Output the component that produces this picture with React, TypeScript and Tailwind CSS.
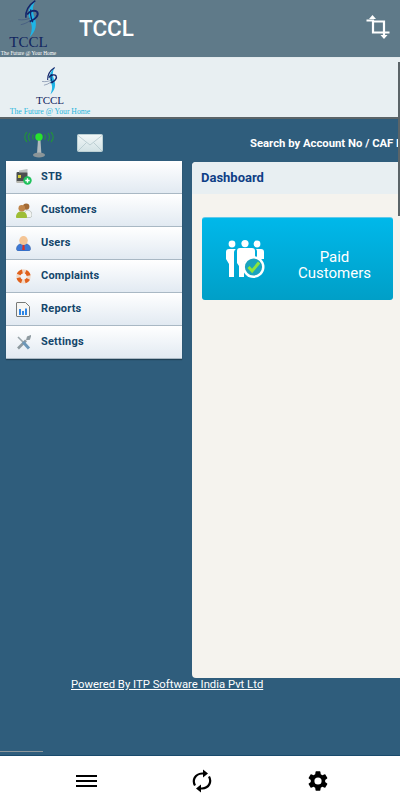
import React from 'react';

const Swoosh = ({ className }: { className: string }) => (
  <svg className={className} viewBox="0 0 40 60" fill="none">
    <path d="M30 1C20 10 17 20 21 30c3 8 6 14 0 29 10-10 12-20 8-31-3-9-5-16 1-27z" fill="#1fb4e6" />
    <path d="M30 1C21 7 14 15 15 28" stroke="#12256b" strokeWidth="2.400" />
    <path d="M17 23c4-6 13-8 16-4 3 5-3 12-12 15" stroke="#12256b" strokeWidth="3" />
    <path d="M23 15c-2 7 0 13 3 20" stroke="#12256b" strokeWidth="2" />
    <path d="M3 31c7 1 14 0 20-3M7 39c5-1 10-3 14-6" stroke="#3c527e" strokeWidth="1" />
  </svg>
);

const CropIcon = () => (
  <svg className="w-[24px] h-[24px]" viewBox="0 0 24 24" fill="none" stroke="white" strokeWidth="2.200">
    <path d="M0.500 5.500H7V17.500H23.500" />
    <path d="M7 6.500H18V21" />
    <path d="M6.500 0l-3.500 4h7z" fill="white" stroke="none" />
    <path d="M18 24l-3.500-4h7z" fill="white" stroke="none" />
  </svg>
);

const SignalIcon = () => (
  <svg className="w-[30px] h-[26px]" viewBox="0 0 30 26" fill="none">
    <path d="M6 1c-2 2-2 6 0 8M3 0C0 3 0 7 3 10M24 1c2 2 2 6 0 8M27 0c3 3 3 7 0 10M9.500 2.500c-1 1-1 4 0 5M20.500 2.500c1 1 1 4 0 5" stroke="#22943a" strokeWidth="1.100" />
    <path d="M14 7h2.400l1 15h-4.400z" fill="#b0babd" />
    <ellipse cx="15" cy="23" rx="6" ry="2.400" fill="#8b9598" />
    <circle cx="15" cy="5" r="3.700" fill="#28e32d" />
  </svg>
);

const MailIcon = () => (
  <svg className="w-[26px] h-[18px]" viewBox="0 0 26 18">
    <defs>
      <linearGradient id="mailFill" x1="0" y1="0" x2="0" y2="1">
        <stop offset="0" stopColor="#f2f7f7" />
        <stop offset="1" stopColor="#d2e2e5" />
      </linearGradient>
    </defs>
    <rect x="0.500" y="0.500" width="25" height="17" rx="1" fill="url(#mailFill)" stroke="#bcd0d4" />
    <path d="M1 1.500l12 9.500 12-9.500M1 17l8.500-8.500M25 17l-8.500-8.500" fill="none" stroke="#b4c8cd" strokeWidth="0.800" />
  </svg>
);

const StbIcon = () => (
  <svg className="w-[16px] h-[16px]" viewBox="0 0 16 16">
    <rect x="0.500" y="3" width="11" height="10" rx="1" fill="#4c5050" />
    <path d="M3 1.500l8.500-1.500v3.500H3z" fill="#b9bfbe" />
    <rect x="2" y="6" width="3" height="3" fill="#d8d23a" />
    <rect x="0.500" y="12" width="9" height="2" fill="#b6b6ae" />
    <circle cx="11.500" cy="11.500" r="4.200" fill="#1fc25c" />
    <path d="M9.300 10.700h1.500V9.300h1.400v1.400h1.500v1.600h-1.500v1.400h-1.400v-1.400H9.300z" fill="#ffffff" />
  </svg>
);

const CustomersIcon = () => (
  <svg className="w-[16px] h-[15px]" viewBox="0 0 16 15">
    <path d="M8 14c0-3 .500-6 3-7 3 0 5 2 5 5 0 1.500-1 2.500-2 2.500H8z" fill="#f2f4f2" stroke="#a3aba6" strokeWidth="0.600" />
    <circle cx="10.200" cy="3.600" r="3.200" fill="#a26a35" />
    <path d="M0 14c0-3.500 2-5.500 5.500-5.500S11 10.500 11 14c0 .500-.300 1-1 1H1c-.700 0-1-.500-1-1z" fill="#9dbd36" />
    <circle cx="5.800" cy="5.200" r="3.300" fill="#c08449" />
  </svg>
);

const UsersIcon = () => (
  <svg className="w-[15px] h-[15px]" viewBox="0 0 15 15">
    <path d="M0.500 13c0-3.500 2.500-5.500 7-5.500s7 2 7 5.500c0 1-.800 2-2 2h-10c-1.200 0-2-1-2-2z" fill="#3b78d6" stroke="#2a569a" strokeWidth="0.500" />
    <ellipse cx="7.500" cy="4.600" rx="4.300" ry="4.500" fill="#f4c596" />
    <path d="M6.600 9h1.800l.400 5h-2.600z" fill="#dc3126" />
  </svg>
);

const ComplaintsIcon = () => (
  <svg className="w-[15px] h-[15px]" viewBox="0 0 15 15" fill="none">
    <circle cx="7.500" cy="7.500" r="5.200" stroke="#f0d9c8" strokeWidth="4" />
    <circle cx="7.500" cy="7.500" r="5.200" stroke="#e0611c" strokeWidth="4" strokeDasharray="5 3.170" strokeDashoffset="2.500" transform="rotate(45 7.500 7.500)" />
  </svg>
);

const ReportsIcon = () => (
  <svg className="w-[14px] h-[15px]" viewBox="0 0 14 15">
    <path d="M0.500 1c0-.300.200-.500.500-.500h8.500l4 4V14c0 .300-.200.500-.500.500H1c-.300 0-.500-.200-.500-.500z" fill="#f6f6f4" stroke="#777a78" />
    <rect x="3" y="7" width="2" height="6" fill="#2f86e6" />
    <rect x="6" y="9" width="2" height="4" fill="#2f86e6" />
    <rect x="9" y="6.500" width="2" height="6.500" fill="#2f86e6" />
  </svg>
);

const SettingsIcon = () => (
  <svg className="w-[15px] h-[15px]" viewBox="0 0 15 15" fill="none">
    <path d="M2 13.500L10 5.500" stroke="#8e9aa0" strokeWidth="2.600" />
    <path d="M14.500 0.800L11.500 2l-.700 2.500 2.700-.300z" fill="#8e9aa0" stroke="#8e9aa0" strokeWidth="1.200" />
    <path d="M2 2L7 7" stroke="#9aa5aa" strokeWidth="1.600" />
    <path d="M7 7L13 13.500" stroke="#6c97b8" strokeWidth="3" />
  </svg>
);

const PaidIcon = () => (
  <svg className="w-[42px] h-[38px]" viewBox="0 0 42 38">
    <g fill="white">
      <circle cx="6" cy="4" r="3.400" />
      <circle cx="19" cy="3.600" r="3.600" />
      <circle cx="31" cy="4" r="3.400" />
      <path d="M0 12c0-2 1-3 3-3h7c-1.500 1-2 2-2 4v24H3V24l-3-5z" />
      <path d="M11 11c0-2 1-3 3-3h12c2 0 3 1 3 3v10H18v16h-5V26l-2-3z" />
      <path d="M30 9h5c2 0 3 1 3 3v7h-7v-7c0-1 0-2-1-3z" />
      <circle cx="27.500" cy="27" r="11" />
    </g>
    <circle cx="27.500" cy="27" r="8.600" fill="#1aa3bd" />
    <path d="M22.500 27l3.600 4 7-8.500" fill="none" stroke="#8ce53c" strokeWidth="3" />
  </svg>
);

const GearIcon = () => (
  <svg className="w-[24px] h-[24px]" viewBox="0 0 24 24" fill="black">
    <path d="M19.140 12.940c.040-.300.060-.610.060-.940s-.020-.640-.070-.940l2.030-1.580a.500.500 0 0 0 .120-.640l-1.920-3.320a.500.500 0 0 0-.600-.220l-2.390.960a7 7 0 0 0-1.620-.940l-.360-2.540a.500.500 0 0 0-.500-.420h-3.840a.500.500 0 0 0-.490.420l-.360 2.540c-.590.240-1.130.560-1.620.940l-2.390-.960a.500.500 0 0 0-.600.220L2.670 8.840a.500.500 0 0 0 .120.640l2.030 1.580c-.050.300-.080.630-.080.940s.020.640.07.940l-2.030 1.580a.500.500 0 0 0-.120.640l1.920 3.320c.120.220.370.290.600.220l2.390-.960c.500.380 1.030.700 1.620.940l.360 2.540c.050.240.240.420.490.420h3.840c.250 0 .450-.180.490-.420l.360-2.540c.590-.240 1.130-.560 1.620-.940l2.390.960c.220.080.470 0 .600-.220l1.920-3.320a.500.500 0 0 0-.120-.640zM12 15.600a3.600 3.600 0 1 1 0-7.200 3.600 3.600 0 0 1 0 7.200z" />
  </svg>
);

const SyncIcon = () => (
  <svg className="w-[20px] h-[24px]" viewBox="0 0 20 24" fill="none" stroke="black" strokeWidth="2.200">
    <path d="M3 16.500C0 11 3 5 10 4.500h2" />
    <path d="M17 7.500C20 13 17 19 10 19.500H8" />
    <path d="M11 0.500l5 4-5 4z" fill="black" stroke="none" />
    <path d="M9 15.500l-5 4 5 4z" fill="black" stroke="none" />
  </svg>
);

const menuItems = [
  { label: 'STB', icon: <StbIcon /> },
  { label: 'Customers', icon: <CustomersIcon /> },
  { label: 'Users', icon: <UsersIcon /> },
  { label: 'Complaints', icon: <ComplaintsIcon /> },
  { label: 'Reports', icon: <ReportsIcon /> },
  { label: 'Settings', icon: <SettingsIcon /> },
];

const App = () => {
  return (
    <div className="relative w-[400px] h-[800px] overflow-hidden flex flex-col bg-[#2f5d7c] font-['Roboto',sans-serif]">
      {/* App bar */}
      <header className="h-[58px] shrink-0 flex items-center bg-[#5f7a89] border-b border-[#e4ebee]">
        <div className="w-[57px] mr-[22px] shrink-0 flex flex-col items-center h-full">
          <Swoosh className="w-[26px] h-[38px]" />
          <div className="mt-[-1px] text-[15px] leading-[11px] text-[#10245f] font-['Liberation_Serif',serif]">TCCL</div>
          <div className="mt-[2px] text-[5.300px] leading-[6px] whitespace-nowrap text-white font-['Liberation_Serif',serif]">The Future @ Your Home</div>
        </div>
        <h1 className="flex-1 text-[22.500px] font-medium text-white">TCCL</h1>
        <div className="mr-[10px] mb-[3px]"><CropIcon /></div>
      </header>

      {/* Banner */}
      <div className="h-[61px] shrink-0 flex flex-col bg-[#e8eff2] border-b-2 border-[#5b6468] pt-[9px] pl-[9px]">
        <div className="w-[82px] flex flex-col items-center">
          <Swoosh className="w-[20px] h-[28px]" />
          <div className="text-[11px] leading-[9px] text-[#10245f] font-['Liberation_Serif',serif] mt-[1px]">TCCL</div>
          <div className="mt-[2px] text-[7.700px] leading-[9px] whitespace-nowrap text-[#26b5dc] font-['Liberation_Serif',serif]">The Future @ Your Home</div>
        </div>
      </div>

      {/* Status and search row */}
      <div className="h-[42px] shrink-0 flex items-start">
        <div className="ml-[24px] mt-[13px]"><SignalIcon /></div>
        <div className="ml-[23px] mt-[15px]"><MailIcon /></div>
        <span className="ml-[147px] mt-[18px] text-[11.300px] leading-[14px] font-bold text-white whitespace-nowrap">Search by Account No / CAF No</span>
      </div>

      {/* Menu and dashboard */}
      <div className="flex h-[517px] shrink-0 pl-[6px] gap-[10px]">
        <nav className="w-[176px] shrink-0 self-start flex flex-col shadow-[0_1px_1px_rgba(0,0,0,0.3)]">
          {menuItems.map((item) => (
            <div
              key={item.label}
              className="h-[33px] flex items-center bg-gradient-to-b from-white to-[#e2eaf2] border-b border-[#a9b8c4]"
            >
              <div className="w-[35px] pl-[10px] flex items-center shrink-0">{item.icon}</div>
              <span className="text-[11px] font-bold tracking-[0.2px] text-[#14466b]">{item.label}</span>
            </div>
          ))}
        </nav>

        <main className="flex-1 flex flex-col mt-[1px] rounded-l-[4px] overflow-hidden bg-[#f5f3ee] mr-[-4px]">
          <div className="h-[32px] shrink-0 flex items-center pl-[9px] bg-[#e8eff2]">
            <h2 className="text-[13px] font-bold text-[#0f3f86]">Dashboard</h2>
          </div>
          <div className="pt-[23px] pl-[10px] pr-[11px]">
            <div className="h-[83px] flex items-center rounded-[3px] bg-gradient-to-b from-[#00b8ea] to-[#009fc7] border-t border-[#62c9ea]">
              <div className="ml-[24px] w-[42px] shrink-0"><PaidIcon /></div>
              <div className="flex-1 mr-[7px] pl-[15px] pt-[12px] text-center text-[15px] leading-[16px] text-white">
                Paid<br />Customers
              </div>
            </div>
          </div>
        </main>
      </div>

      {/* Footer link */}
      <div className="flex-1 pl-[71px]">
        <a href="#" className="text-[11.300px] leading-[13px] text-white underline block">Powered By ITP Software India Pvt Ltd</a>
      </div>
      <div className="w-[43px] h-[1px] bg-[#8d979c] mb-[3px]"></div>

      {/* Bottom bar */}
      <footer className="h-[45px] pt-[6px] shrink-0 flex items-center bg-white border-t border-[#194a6c]">
        <div className="w-[172px] flex justify-center">
          <div className="w-[21px] flex flex-col gap-[3px]">
            <span className="h-[2px] bg-black"></span>
            <span className="h-[2px] bg-black"></span>
            <span className="h-[2px] bg-black"></span>
          </div>
        </div>
        <div className="w-[60px] flex justify-center"><SyncIcon /></div>
        <div className="flex-1 flex justify-start pl-[74px]"><GearIcon /></div>
      </footer>

      {/* Scrollbar */}
      <div className="absolute right-0 top-[62px] w-[2px] h-[154px] bg-[#5b6468]"></div>
    </div>
  );
};

export default App;
